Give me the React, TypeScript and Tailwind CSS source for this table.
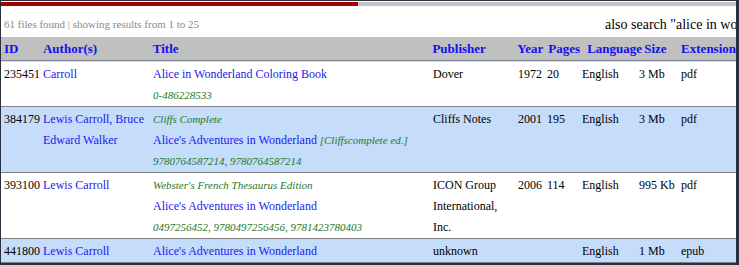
import React from "react";

type Row = {
  id: string;
  authors: string;
  series?: string;
  title: string;
  edition?: string;
  isbn?: string;
  publisher: string;
  year: string;
  pages: string;
  language: string;
  size: string;
  ext: string;
};

const rows: Row[] = [
  {
    id: "235451",
    authors: "Carroll",
    title: "Alice in Wonderland Coloring Book",
    isbn: "0-486228533",
    publisher: "Dover",
    year: "1972",
    pages: "20",
    language: "English",
    size: "3 Mb",
    ext: "pdf",
  },
  {
    id: "384179",
    authors: "Lewis Carroll, Bruce Edward Walker",
    series: "Cliffs Complete",
    title: "Alice's Adventures in Wonderland",
    edition: "[Cliffscomplete ed.]",
    isbn: "9780764587214, 9780764587214",
    publisher: "Cliffs Notes",
    year: "2001",
    pages: "195",
    language: "English",
    size: "3 Mb",
    ext: "pdf",
  },
  {
    id: "393100",
    authors: "Lewis Carroll",
    series: "Webster's French Thesaurus Edition",
    title: "Alice's Adventures in Wonderland",
    isbn: "0497256452, 9780497256456, 9781423780403",
    publisher: "ICON Group International, Inc.",
    year: "2006",
    pages: "114",
    language: "English",
    size: "995 Kb",
    ext: "pdf",
  },
  {
    id: "441800",
    authors: "Lewis Carroll",
    title: "Alice's Adventures in Wonderland",
    publisher: "unknown",
    year: "",
    pages: "",
    language: "English",
    size: "1 Mb",
    ext: "epub",
  },
];

const App = () => {
  return (
    <div className="w-[739px] h-[265px] overflow-hidden bg-white border-l border-t border-r-[3px] border-b-2 border-[#27303c] font-['Liberation_Serif',serif] text-[12px]">
      {/* progress bar */}
      <div className="mt-px h-[4px] flex bg-[#c4c4c4]">
        <div className="w-[357px] bg-[#a30000]" />
      </div>

      {/* stats line */}
      <div className="h-[31px] pt-[6px] flex items-center pl-[3px] whitespace-nowrap overflow-hidden">
        <span className="w-[601px] shrink-0 text-[11px] text-[#8a8a8a]">
          61 files found | showing results from 1 to 25
        </span>
        <span className="text-[14px] text-black">also search "alice in wonderland"</span>
      </div>

      {/* header */}
      <div className="h-[24px] flex items-center bg-[#c0c0c0] border-b border-[#7d8796] font-bold text-[13px] text-[#1010ee] whitespace-nowrap">
        <div className="w-[39px] pl-[3px]">ID</div>
        <div className="w-[110px] pl-[3px]">Author(s)</div>
        <div className="w-[280px] pl-[3px]">Title</div>
        <div className="w-[85px] pl-[3px]">Publisher</div>
        <div className="w-[31px] pl-[3px]">Year</div>
        <div className="w-[39px] pl-[3px]">Pages</div>
        <div className="w-[57px] pl-[3px]">Language</div>
        <div className="w-[37px] pl-[3px]">Size</div>
        <div className="pl-[3px]">Extension</div>
      </div>
      <div className="h-px bg-[#c6dcfb]" />

      {/* rows */}
      {rows.map((r, i) => (
        <div
          key={r.id}
          className={`flex border-b border-[#7f7f7f] leading-[21px] pt-[2px] ${
            i % 2 === 1 ? "bg-[#c6dcfb]" : "bg-white"
          }`}
        >
          <div className="w-[39px] shrink-0 pl-[3px] text-black">{r.id}</div>
          <div className="w-[110px] shrink-0 pl-[3px] pr-1 text-[#1a1af0]">{r.authors}</div>
          <div className="w-[280px] shrink-0 pl-[3px] whitespace-nowrap">
            {r.series && (
              <div className="italic text-[11px] text-[#1f7a1f]">{r.series}</div>
            )}
            <div>
              <span className="text-[#1a1af0]">{r.title}</span>
              {r.edition && (
                <span className="italic text-[11px] text-[#1f7a1f]"> {r.edition}</span>
              )}
            </div>
            {r.isbn && <div className="italic text-[11px] text-[#1f7a1f]">{r.isbn}</div>}
          </div>
          <div className="w-[85px] shrink-0 pl-[3px] pr-1 text-black">{r.publisher}</div>
          <div className="w-[29px] shrink-0 pl-[3px] text-black">{r.year}</div>
          <div className="w-[35px] shrink-0 pl-[3px] text-black">{r.pages}</div>
          <div className="w-[57px] shrink-0 pl-[3px] text-black">{r.language}</div>
          <div className="w-[42px] shrink-0 pl-[3px] text-black whitespace-nowrap">{r.size}</div>
          <div className="pl-[3px] text-black">{r.ext}</div>
        </div>
      ))}
    </div>
  );
};

export default App;
